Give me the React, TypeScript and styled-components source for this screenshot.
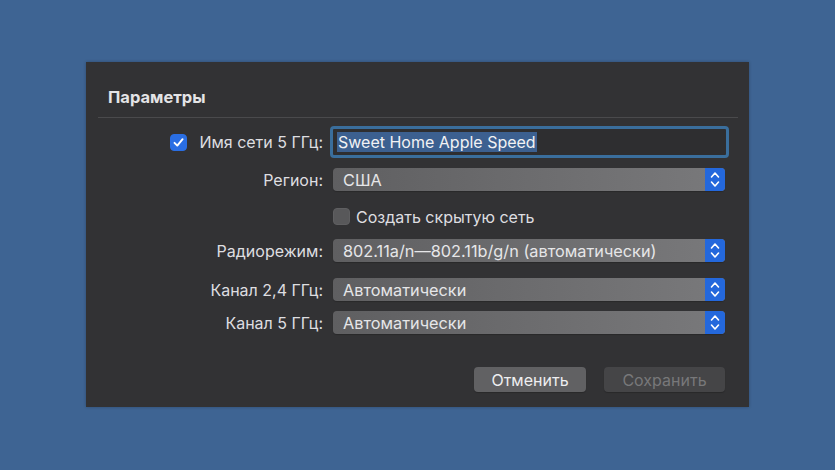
import React, { useState } from "react";
import styled, { createGlobalStyle } from "styled-components";

const GlobalStyle = createGlobalStyle`
  html, body {
    margin: 0;
    padding: 0;
    background: #3e6493;
    font-family: Inter, "Noto Sans", "Liberation Sans", sans-serif;
    -webkit-font-smoothing: antialiased;
  }
`;

const Screen = styled.div`
  width: 835px;
  height: 470px;
  padding: 62px 0 0 86px;
  box-sizing: border-box;
`;

const Sheet = styled.div`
  width: 663px;
  height: 345px;
  box-sizing: border-box;
  background: #323234;
  box-shadow: 0 0 3px rgba(0, 0, 0, 0.25);
  padding: 0 11px 0 12px;
  color: #dedee0;
`;

const Title = styled.div`
  font-size: 16.5px;
  font-weight: 700;
  color: #e4e4e6;
  padding: 25px 0 0 10px;
  height: 56px;
  box-sizing: border-box;
  border-bottom: 1px solid #4a4a4c;
`;

const Form = styled.div`
  display: flex;
  flex-direction: column;
  padding-top: 8px;
`;

const Row = styled.div<{ $top?: number; $h?: number }>`
  display: grid;
  grid-template-columns: 225px 392px;
  column-gap: 10px;
  align-items: center;
  margin-top: ${(p) => p.$top ?? 0}px;
  height: ${(p) => p.$h ?? 23}px;
`;

const Label = styled.div`
  display: flex;
  align-items: center;
  justify-content: flex-end;
  gap: 12px;
  font-size: 16px;
  white-space: nowrap;
`;

const Box = styled.div<{ $on?: boolean }>`
  width: 17px;
  height: 17px;
  border-radius: 4px;
  box-sizing: border-box;
  display: flex;
  align-items: center;
  justify-content: center;
  background: ${(p) => (p.$on ? "#2a6ee3" : "#58585a")};
  border: 1px solid ${(p) => (p.$on ? "#2a6ee3" : "#5f5f61")};
  flex: none;
`;

const CheckRow = styled.div`
  display: flex;
  align-items: center;
  gap: 6px;
  font-size: 16px;
`;

const Field = styled.div`
  margin: 0 -4px 0 -3px;
  height: 32px;
  box-sizing: border-box;
  border: 3px solid #3a6e9c;
  border-radius: 4px;
  background: #2e2e30;
  display: flex;
  align-items: center;
  padding-left: 4px;
`;

const Selected = styled.span`
  background: #3c6090;
  color: #f2f2f4;
  font-size: 16px;
  line-height: 20px;
  padding: 0 1px;
`;

const Select = styled.div`
  height: 23px;
  border-radius: 4px;
  background: linear-gradient(to right, #5f5f61, #79797b);
  display: flex;
  align-items: center;
  justify-content: space-between;
  box-shadow: 0 1px 1px rgba(0, 0, 0, 0.2);
  overflow: hidden;
`;

const SelectText = styled.span`
  padding-left: 10px;
  font-size: 16.3px;
  color: #e6e6e8;
`;

const Stepper = styled.div`
  width: 20px;
  height: 23px;
  background: #2468dc;
  display: flex;
  align-items: center;
  justify-content: center;
`;

const Buttons = styled.div`
  display: flex;
  justify-content: flex-end;
  gap: 18px;
  margin-top: 33px;
  padding-right: 13px;
`;

const Button = styled.div<{ $disabled?: boolean }>`
  height: 25px;
  border-radius: 4px;
  box-sizing: border-box;
  display: flex;
  align-items: center;
  justify-content: center;
  font-size: 16px;
  background: ${(p) => (p.$disabled ? "#454547" : "#616163")};
  color: ${(p) => (p.$disabled ? "#78787a" : "#eeeef0")};
  width: ${(p) => (p.$disabled ? 121 : 112)}px;
  box-shadow: 0 1px 1px rgba(0, 0, 0, 0.2);
`;

const Check = () => (
  <svg width="13" height="13" viewBox="0 0 13 13">
    <path d="M2.5 6.8 L5.3 9.6 L10.6 3.2" fill="none" stroke="#fff" strokeWidth="1.9" strokeLinecap="round" strokeLinejoin="round" />
  </svg>
);

const Chevrons = () => (
  <svg width="12" height="19" viewBox="0 0 12 19">
    <path d="M2.5 7 L6 3 L9.5 7 M2.5 12 L6 16 L9.5 12" fill="none" stroke="#fff" strokeWidth="1.6" strokeLinecap="round" strokeLinejoin="round" />
  </svg>
);

const Popup = ({ value }: { value: string }) => (
  <Select>
    <SelectText>{value}</SelectText>
    <Stepper>
      <Chevrons />
    </Stepper>
  </Select>
);

export default function App() {
  const [name] = useState("Sweet Home Apple Speed");

  return (
    <Screen>
      <GlobalStyle />
      <Sheet>
        <Title>Параметры</Title>
        <Form>
          <Row $h={32}>
            <Label>
              <Box $on>
                <Check />
              </Box>
              Имя сети 5 ГГц:
            </Label>
            <Field>
              <Selected>{name}</Selected>
            </Field>
          </Row>
          <Row $top={10}>
            <Label>Регион:</Label>
            <Popup value="США" />
          </Row>
          <Row $top={14} $h={23}>
            <div />
            <CheckRow>
              <Box />
              Создать скрытую сеть
            </CheckRow>
          </Row>
          <Row $top={11}>
            <Label>Радиорежим:</Label>
            <Popup value="802.11a/n—802.11b/g/n (автоматически)" />
          </Row>
          <Row $top={16}>
            <Label>Канал 2,4 ГГц:</Label>
            <Popup value="Автоматически" />
          </Row>
          <Row $top={10}>
            <Label>Канал 5 ГГц:</Label>
            <Popup value="Автоматически" />
          </Row>
          <Buttons>
            <Button>Отменить</Button>
            <Button $disabled>Сохранить</Button>
          </Buttons>
        </Form>
      </Sheet>
    </Screen>
  );
}
